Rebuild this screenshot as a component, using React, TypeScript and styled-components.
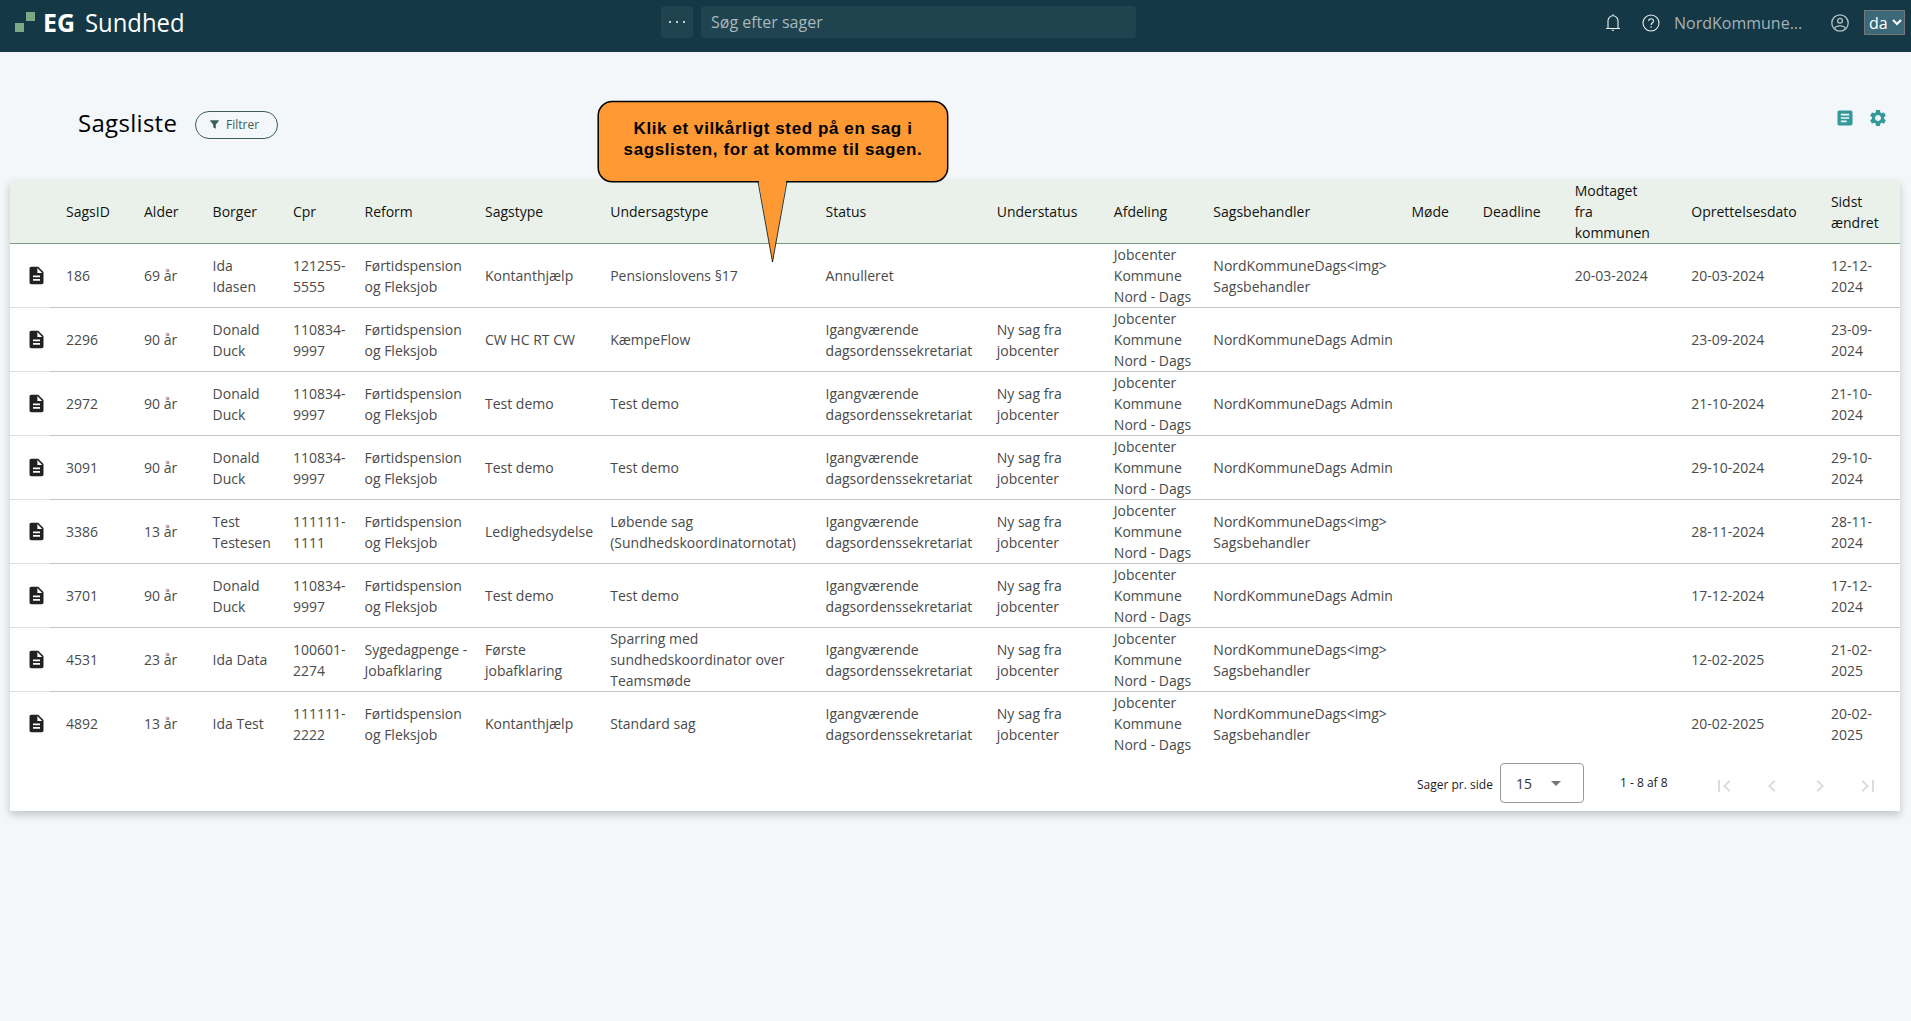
import React from 'react';
import styled, { createGlobalStyle } from 'styled-components';

const sans = '"Open Sans", "Noto Sans", sans-serif';

const GlobalStyle = createGlobalStyle`
  *, *::before, *::after { box-sizing: border-box; }
  body {
    margin: 0;
    background: #f3f7fa;
    font-family: ${sans};
    overflow: hidden;
  }
`;

const Page = styled.div`
  position: relative;
  display: flex;
  flex-direction: column;
  height: 1021px;
`;

const TopBar = styled.header`
  display: grid;
  grid-template-columns: 661px 475px 1fr;
  height: 52px;
  background: #143845;
`;

const Brand = styled.div`
  padding-left: 15px;
`;

const LogoMark = styled.svg`
  display: block;
`;

const SearchGroup = styled.div`
  display: flex;
  gap: 8px;
  padding-top: 6px;
`;

const MoreButton = styled.button`
  display: flex;
  align-items: center;
  justify-content: center;
  gap: 4.500px;
  width: 32px;
  height: 32px;
  padding: 0;
  border: 0;
  border-radius: 4px;
  background: #1f444f;
`;

const Dot = styled.i`
  width: 2.500px;
  height: 2.500px;
  border-radius: 50%;
  background: #fff;
`;

const SearchBox = styled.div`
  flex: 1;
  height: 32px;
  padding-left: 10px;
  border-radius: 4px;
  background: #1f444f;
  color: #a9b8bd;
  font-size: 16px;
  line-height: 32px;
`;

const Tools = styled.div`
  display: flex;
  align-items: center;
  justify-content: flex-end;
  height: 45px;
  padding-right: 6px;
`;

const HelpGlyph = styled.svg`
  margin-left: 21px;
`;

const UserName = styled.span`
  width: 157px;
  margin-left: 14px;
  color: #a5b3b8;
  font-size: 16px;
  line-height: 22px;
`;

const Language = styled.div`
  display: flex;
  align-items: center;
  gap: 4px;
  width: 41px;
  height: 25px;
  margin-left: 15px;
  padding-left: 4px;
  border: 1px solid #767676;
  background: #3b6978;
  color: #fff;
  font-size: 16px;
  line-height: 22px;
`;

const Heading = styled.div`
  display: flex;
  align-items: flex-start;
  height: 128px;
  padding: 55px 23px 0 78px;
`;

const Title = styled.h1`
  width: 117px;
  margin: 0;
  font-size: 24px;
  font-weight: 500;
  letter-spacing: 0.3px;
  line-height: 32px;
  color: #000;
`;

const FilterButton = styled.button`
  display: flex;
  align-items: center;
  gap: 7px;
  width: 83px;
  height: 28px;
  margin-top: 4px;
  padding: 0 0 1px 14px;
  border: 1px solid #3b5d59;
  border-radius: 14px;
  background: transparent;
  color: #3b5d59;
  font: 12px ${sans};
`;

const HeadingIcons = styled.div`
  display: flex;
  gap: 13px;
  margin-left: auto;
  padding-top: 1px;
`;

const Card = styled.main`
  width: 1890px;
  height: 631px;
  margin-left: 10px;
  background: #fff;
  box-shadow: 0 4px 8px rgba(0, 0, 0, 0.2);
`;

const Row = styled.div<{ $head?: boolean; $last?: boolean }>`
  display: grid;
  grid-template-columns:
    40px 94px 68.6px 80.4px 71.5px 120.5px 125.2px 215.4px 171.2px
    117.1px 99.5px 198.1px 71.4px 91.800px 116.700px 139.600px 69px;
  height: 64px;
  background: ${p => (p.$head ? '#eaf1ea' : '#fff')};
  color: ${p => (p.$head ? '#111' : '#4a4a4a')};
  --line: ${p => (p.$head ? '#769e80' : p.$last ? 'transparent' : '#c6c6c6')};
  --icon-line: ${p => (p.$head ? '#769e80' : p.$last ? 'transparent' : '#e0e0e0')};
`;

const Cell = styled.div<{ $first?: boolean }>`
  display: flex;
  align-items: center;
  padding-left: ${p => (p.$first ? '16px' : '0')};
  border-bottom: 1px solid var(--line);
  font-size: 14px;
  line-height: 21px;
  white-space: pre;
`;

const IconCell = styled.div`
  display: flex;
  align-items: center;
  padding-left: 15.500px;
  border-bottom: 1px solid var(--icon-line);
`;

const Paginator = styled.footer`
  display: flex;
  align-items: flex-start;
  justify-content: flex-end;
  height: 55px;
  padding: 7px 20px 0 0;
  color: #1c1c1c;
  font-size: 12px;
`;

const PageSizeLabel = styled.span`
  width: 83px;
  padding-top: 13px;
  line-height: 17px;
`;

const PageSize = styled.div`
  display: flex;
  align-items: center;
  justify-content: space-between;
  width: 84px;
  height: 40px;
  padding: 0 22px 0 15px;
  border: 1px solid #9a9a9a;
  border-radius: 4px;
  color: #333;
  font-size: 14px;
`;

const Caret = styled.i`
  border: 5px solid transparent;
  border-top-color: #757575;
  border-bottom: 0;
`;

const Range = styled.span`
  width: 92px;
  margin-left: 36px;
  padding-top: 11px;
  line-height: 17px;
`;

const PageButtons = styled.div`
  display: flex;
  gap: 24px;
  padding-top: 11px;
`;

const Callout = styled.aside`
  position: absolute;
  left: 597px;
  top: 100px;
  width: 352px;
  height: 164px;
`;

const CalloutShape = styled.svg`
  position: absolute;
  inset: 0;
`;

const CalloutText = styled.p`
  position: relative;
  margin: 0;
  padding-top: 18px;
  color: #000;
  font: bold 17px/21px "Liberation Sans", Arial, sans-serif;
  letter-spacing: 0.600px;
  text-align: center;
  white-space: pre;
`;

const columns = [
  'SagsID', 'Alder', 'Borger', 'Cpr', 'Reform', 'Sagstype', 'Undersagstype', 'Status', 'Understatus',
  'Afdeling', 'Sagsbehandler', 'Møde', 'Deadline', 'Modtaget\nfra\nkommunen', 'Oprettelsesdato', 'Sidst\nændret',
];

const reform = 'Førtidspension\nog Fleksjob';
const active = 'Igangværende\ndagsordenssekretariat';
const fresh = 'Ny sag fra\njobcenter';
const department = 'Jobcenter\nKommune\nNord - Dags';
const admin = 'NordKommuneDags Admin';
const handler = 'NordKommuneDags<img>\nSagsbehandler';

const cases: string[][] = [
  ['186', '69 år', 'Ida\nIdasen', '121255-\n5555', reform, 'Kontanthjælp', 'Pensionslovens §17', 'Annulleret', '', department, handler, '', '', '20-03-2024', '20-03-2024', '12-12-\n2024'],
  ['2296', '90 år', 'Donald\nDuck', '110834-\n9997', reform, 'CW HC RT CW', 'KæmpeFlow', active, fresh, department, admin, '', '', '', '23-09-2024', '23-09-\n2024'],
  ['2972', '90 år', 'Donald\nDuck', '110834-\n9997', reform, 'Test demo', 'Test demo', active, fresh, department, admin, '', '', '', '21-10-2024', '21-10-\n2024'],
  ['3091', '90 år', 'Donald\nDuck', '110834-\n9997', reform, 'Test demo', 'Test demo', active, fresh, department, admin, '', '', '', '29-10-2024', '29-10-\n2024'],
  ['3386', '13 år', 'Test\nTestesen', '111111-\n1111', reform, 'Ledighedsydelse', 'Løbende sag\n(Sundhedskoordinatornotat)', active, fresh, department, handler, '', '', '', '28-11-2024', '28-11-\n2024'],
  ['3701', '90 år', 'Donald\nDuck', '110834-\n9997', reform, 'Test demo', 'Test demo', active, fresh, department, admin, '', '', '', '17-12-2024', '17-12-\n2024'],
  ['4531', '23 år', 'Ida Data', '100601-\n2274', 'Sygedagpenge -\nJobafklaring', 'Første\njobafklaring', 'Sparring med\nsundhedskoordinator over\nTeamsmøde', active, fresh, department, handler, '', '', '', '12-02-2025', '21-02-\n2025'],
  ['4892', '13 år', 'Ida Test', '111111-\n2222', reform, 'Kontanthjælp', 'Standard sag', active, fresh, department, handler, '', '', '', '20-02-2025', '20-02-\n2025'],
];

const Logo = () => (
  <LogoMark width="180" height="44" viewBox="0 0 180 44">
    <rect x="11" y="12" width="9" height="9" fill="#7aa883" />
    <rect x="0" y="23" width="9" height="9" fill="#7aa883" />
    <text x="28" y="31.5" fontFamily={sans} fontWeight="700" fontSize="25.5" fill="#fff" textLength="32" lengthAdjust="spacingAndGlyphs">EG</text>
    <text x="70" y="31.5" fontFamily={sans} fontSize="25.5" fill="#fff" textLength="99.5" lengthAdjust="spacingAndGlyphs">Sundhed</text>
  </LogoMark>
);

const BellIcon = () => (
  <svg width="16" height="18" viewBox="0 0 16 18" fill="none" stroke="#eef2f3" strokeWidth="1.1">
    <path d="M1 14.5h14M3 14.500V6.800a5 5 0 0 1 10 0v7.700M8 1.800V.3" />
    <path d="M6.600 15.800a1.400 1.100 0 0 0 2.800 0z" fill="#eef2f3" stroke="none" />
  </svg>
);

const HelpIcon = () => (
  <HelpGlyph width="18" height="18" viewBox="0 0 18 18" fill="none" stroke="#eef2f3" strokeWidth="1.1">
    <circle cx="9" cy="9" r="8" />
    <path d="M6.700 7.100c0-3 4.800-3 4.800-.2 0 1.900-2.400 1.900-2.400 4.100" />
    <circle cx="9.100" cy="13" r=".8" fill="#eef2f3" stroke="none" />
  </HelpGlyph>
);

const UserIcon = () => (
  <svg width="18" height="18" viewBox="0 0 18 18" fill="none" stroke="#b7c3c7" strokeWidth="1.300">
    <circle cx="9" cy="9" r="8.200" />
    <circle cx="9" cy="6.800" r="2.400" />
    <path d="M3.500 14.800c.8-4 10.200-4 11 0" />
  </svg>
);

const DocumentIcon = () => (
  <svg width="21" height="21" viewBox="0 0 24 24" fill="#212121">
    <path d="M14 2H6c-1.100 0-2 .9-2 2v16c0 1.100.9 2 2 2h12c1.100 0 2-.9 2-2V8l-6-6zm2 16H8v-2h8v2zm0-4H8v-2h8v2zm-3-5V3.500L18.500 9H13z" />
  </svg>
);

const ArticleIcon = () => (
  <svg width="20" height="20" viewBox="0 0 24 24" fill="#339999">
    <path d="M19 3H5c-1.100 0-2 .9-2 2v14c0 1.100.9 2 2 2h14c1.100 0 2-.9 2-2V5c0-1.100-.9-2-2-2zm-5 14H7v-2h7v2zm3-4H7v-2h10v2zm0-4H7V7h10v2z" />
  </svg>
);

const GearIcon = () => (
  <svg width="20" height="20" viewBox="0 0 24 24" fill="#339999">
    <path d="M19.140 12.940c.04-.3.060-.61.060-.94 0-.32-.02-.64-.07-.94l2.030-1.580c.18-.14.230-.41.120-.61l-1.920-3.320c-.12-.22-.37-.29-.59-.22l-2.390.96c-.5-.38-1.030-.7-1.620-.94l-.36-2.540c-.04-.24-.24-.41-.48-.41h-3.840c-.24 0-.43.170-.47.410l-.36 2.540c-.59.240-1.130.570-1.620.940l-2.390-.96c-.22-.08-.47 0-.59.220L2.740 8.870c-.12.210-.08.470.120.610l2.030 1.580c-.05.300-.09.630-.09.940s.02.640.07.940l-2.030 1.580c-.18.140-.23.410-.12.610l1.920 3.320c.12.220.37.290.59.220l2.390-.96c.5.380 1.030.700 1.620.940l.36 2.540c.05.240.24.410.48.410h3.840c.24 0 .44-.17.47-.41l.36-2.540c.59-.24 1.130-.56 1.620-.94l2.390.96c.22.080.47 0 .59-.22l1.920-3.320c.12-.22.07-.47-.12-.61l-2.010-1.580zM12 15.600c-1.980 0-3.600-1.620-3.600-3.600s1.620-3.600 3.600-3.600 3.600 1.620 3.600 3.600-1.620 3.600-3.600 3.600z" />
  </svg>
);

const pageIcons = [
  'M18.410 16.590L13.820 12l4.590-4.590L17 6l-6 6 6 6zM6 6h2v12H6z',
  'M15.410 7.410L14 6l-6 6 6 6 1.410-1.410L10.830 12z',
  'M10 6L8.590 7.410 13.170 12l-4.580 4.590L10 18l6-6z',
  'M5.590 7.410L10.180 12l-4.590 4.590L7 18l6-6-6-6zM16 6h2v12h-2z',
];

export default function App() {
  return (
    <Page>
      <GlobalStyle />
      <TopBar>
        <Brand><Logo /></Brand>
        <SearchGroup>
          <MoreButton><Dot /><Dot /><Dot /></MoreButton>
          <SearchBox>Søg efter sager</SearchBox>
        </SearchGroup>
        <Tools>
          <BellIcon />
          <HelpIcon />
          <UserName>NordKommune...</UserName>
          <UserIcon />
          <Language>
            da
            <svg width="10" height="7" viewBox="0 0 10 7" fill="none" stroke="#fff" strokeWidth="2"><path d="M1 1l4 4 4-4" /></svg>
          </Language>
        </Tools>
      </TopBar>
      <Heading>
        <Title>Sagsliste</Title>
        <FilterButton>
          <svg width="9" height="9" viewBox="0 0 9 9" fill="#3b5d59"><path d="M.2.300h8.600v.8L5.800 4.500V8.800L3.200 7.200V4.500L.2 1.100z" /></svg>
          Filtrer
        </FilterButton>
        <HeadingIcons><ArticleIcon /><GearIcon /></HeadingIcons>
      </Heading>
      <Card>
        <Row $head>
          <IconCell />
          {columns.map((name, i) => <Cell key={name} $first={i === 0}>{name}</Cell>)}
        </Row>
        {cases.map((values, r) => (
          <Row key={values[0]} $last={r === cases.length - 1}>
            <IconCell><DocumentIcon /></IconCell>
            {values.map((value, i) => <Cell key={i} $first={i === 0}>{value}</Cell>)}
          </Row>
        ))}
        <Paginator>
          <PageSizeLabel>Sager pr. side</PageSizeLabel>
          <PageSize>15<Caret /></PageSize>
          <Range>1 - 8 af 8</Range>
          <PageButtons>
            {pageIcons.map(d => <svg key={d} width="24" height="24" viewBox="0 0 24 24" fill="#dcdcdc"><path d={d} /></svg>)}
          </PageButtons>
        </Paginator>
      </Card>
      <Callout>
        <CalloutShape width="352" height="164" viewBox="0 0 352 164">
          <rect x="1.200" y="1.500" width="349.500" height="80.200" rx="14" fill="#ff9933" stroke="#000" strokeWidth="1.500" />
          <path d="M161.500 80L175.500 162L189.500 80z" fill="#ff9933" />
          <path d="M161 81.500L175.500 162L190 81.500" fill="none" stroke="#000" strokeWidth=".8" />
        </CalloutShape>
        <CalloutText>{'Klik et vilkårligt sted på en sag i\nsagslisten, for at komme til sagen.'}</CalloutText>
      </Callout>
    </Page>
  );
}
